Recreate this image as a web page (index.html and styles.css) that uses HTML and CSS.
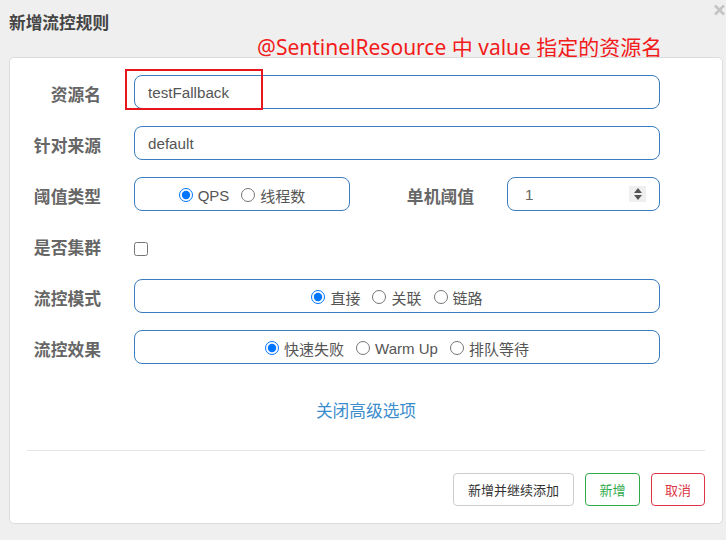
FILE: index.html
```html
<!DOCTYPE html>
<html lang="zh">
<head>
<meta charset="utf-8">
<link rel="stylesheet" href="styles.css">
</head>
<body>
<div class="modal">
  <div class="modal-header">
    <h4 class="modal-title">新增流控规则</h4>
    <svg class="close" width="11" height="12" viewBox="0 0 11 12"><path d="M1 1.5 L10 10.5 M10 1.5 L1 10.5" stroke="#c4c4c4" stroke-width="2.6" fill="none"/></svg>
  </div>
  <div class="note">@SentinelResource 中 value 指定的资源名</div>
  <div class="card">
    <div class="mark"></div>
    <div class="form">
      <div class="row">
        <label class="lbl">资源名</label>
        <div class="ctl"><input class="input" type="text" value="testFallback"></div>
      </div>
      <div class="row">
        <label class="lbl">针对来源</label>
        <div class="ctl"><input class="input" type="text" value="default"></div>
      </div>
      <div class="row">
        <label class="lbl">阈值类型</label>
        <div class="ctl split">
          <div class="box narrow">
            <label class="opt"><input type="radio" name="grade" checked>QPS</label>
            <label class="opt"><input type="radio" name="grade">线程数</label>
          </div>
          <label class="lbl">单机阈值</label>
          <div class="box number">
            <span class="num">1</span>
            <span class="spin"><svg width="10" height="14" viewBox="0 0 10 14"><path d="M5 1 L9 6 L1 6 Z M1 8 L9 8 L5 13 Z" fill="#555"/></svg></span>
          </div>
        </div>
      </div>
      <div class="row row-check">
        <label class="lbl">是否集群</label>
        <div class="ctl"><input class="check" type="checkbox"></div>
      </div>
      <div class="row">
        <label class="lbl">流控模式</label>
        <div class="ctl">
          <div class="box">
            <label class="opt"><input type="radio" name="mode" checked>直接</label>
            <label class="opt"><input type="radio" name="mode">关联</label>
            <label class="opt"><input type="radio" name="mode">链路</label>
          </div>
        </div>
      </div>
      <div class="row">
        <label class="lbl">流控效果</label>
        <div class="ctl">
          <div class="box">
            <label class="opt"><input type="radio" name="effect" checked>快速失败</label>
            <label class="opt"><input type="radio" name="effect">Warm Up</label>
            <label class="opt"><input type="radio" name="effect">排队等待</label>
          </div>
        </div>
      </div>
    </div>
    <div class="adv"><a class="link">关闭高级选项</a></div>
    <div class="footer">
      <button class="btn btn-default">新增并继续添加</button>
      <button class="btn btn-green">新增</button>
      <button class="btn btn-red">取消</button>
    </div>
  </div>
</div>
</body>
</html>
```

FILE: styles.css
```css
* { box-sizing: border-box; }
html, body {
  margin: 0;
  padding: 0;
  background: #efefef;
  font-family: "Liberation Sans", "Noto Sans CJK SC", sans-serif;
  color: #555;
}
.modal {
  position: relative;
  width: 726px;
  height: 540px;
}
.modal-header {
  padding: 12px 9px 0 9px;
  height: 57px;
}
.modal-title {
  margin: 0;
  font-family: "Noto Sans CJK SC", sans-serif;
  font-size: 16.7px;
  line-height: 20px;
  font-weight: bold;
  color: #444;
}
.close {
  position: absolute;
  top: 4px;
  left: 714px;
}
.note {
  position: absolute;
  left: 257px;
  top: 33px;
  font-family: "Noto Sans", "Noto Sans CJK SC", sans-serif;
  font-size: 21px;
  line-height: 29px;
  color: #f21b1b;
  white-space: nowrap;
}
.card {
  position: relative;
  margin-left: 9px;
  width: 714px;
  height: 467px;
  background: #fff;
  border: 1px solid #dcdcdc;
  border-radius: 5px;
  padding-top: 17px;
}
.mark {
  position: absolute;
  left: 115px;
  top: 11px;
  width: 138px;
  height: 41px;
  border: 2px solid #e8141e;
  z-index: 2;
  pointer-events: none;
}
.form {
  display: flex;
  flex-direction: column;
  gap: 17px;
}
.row {
  display: grid;
  grid-template-columns: 91px 526px;
  column-gap: 33px;
  align-items: center;
  height: 34px;
}
.lbl {
  text-align: right;
  padding-top: 3px;
  font-family: "Noto Sans CJK SC", sans-serif;
  font-size: 16.8px;
  font-weight: bold;
  color: #666;
  white-space: nowrap;
}
.ctl { height: 34px; display: flex; align-items: center; }
.input {
  width: 100%;
  height: 34px;
  border: 1px solid #3a7cbf;
  border-radius: 8px;
  padding: 0 13px;
  font-family: "Liberation Sans", "Noto Sans CJK SC", sans-serif;
  font-size: 15.2px;
  color: #555;
  outline: none;
  background: #fff;
}
.split {
  display: grid;
  grid-template-columns: 216px 91px 153px;
  column-gap: 33px;
}
.box {
  height: 34px;
  width: 100%;
  border: 1px solid #3a7cbf;
  border-radius: 8px;
  display: flex;
  align-items: center;
  justify-content: center;
  gap: 12px;
  padding-top: 2px;
  font-family: "Liberation Sans", "Noto Sans CJK SC", sans-serif;
  font-size: 15px;
  color: #555;
}
.opt {
  display: flex;
  align-items: center;
  white-space: nowrap;
}
.opt input {
  margin: 0 5px 0 0;
  width: 14px;
  height: 14px;
  accent-color: #0075ff;
}
.number {
  justify-content: space-between;
  padding: 0 13px 0 17px;
}
.num { font-size: 15.2px; color: #666; }
.spin {
  width: 17px;
  height: 16px;
  background: #efefef;
  display: flex;
  align-items: center;
  justify-content: center;
}
.row-check .ctl { padding-top: 7px; }
.check {
  margin: 0;
  width: 14px;
  height: 14px;
}
.adv {
  display: flex;
  justify-content: center;
  padding-top: 35px;
  padding-bottom: 29px;
  border-bottom: 1px solid #e5e5e5;
  margin: 0 17px;
}
.link {
  font-family: "Noto Sans CJK SC", sans-serif;
  font-size: 16.7px;
  line-height: 22px;
  color: #3c8dcc;
  cursor: pointer;
}
.footer {
  display: flex;
  justify-content: flex-end;
  gap: 11px;
  padding: 22px 17px 0 17px;
}
.btn {
  height: 33px;
  padding: 0 12px;
  background: #fff;
  border: 1px solid #ccc;
  border-radius: 4px;
  font-family: "Noto Sans CJK SC", sans-serif;
  font-size: 13px;
  color: #333;
}
.btn-default { width: 121px; }
.btn-green { width: 55px; border-color: #2fa94a; color: #2fa94a; }
.btn-red { width: 54px; border-color: #dc3545; color: #dc3545; }
```
